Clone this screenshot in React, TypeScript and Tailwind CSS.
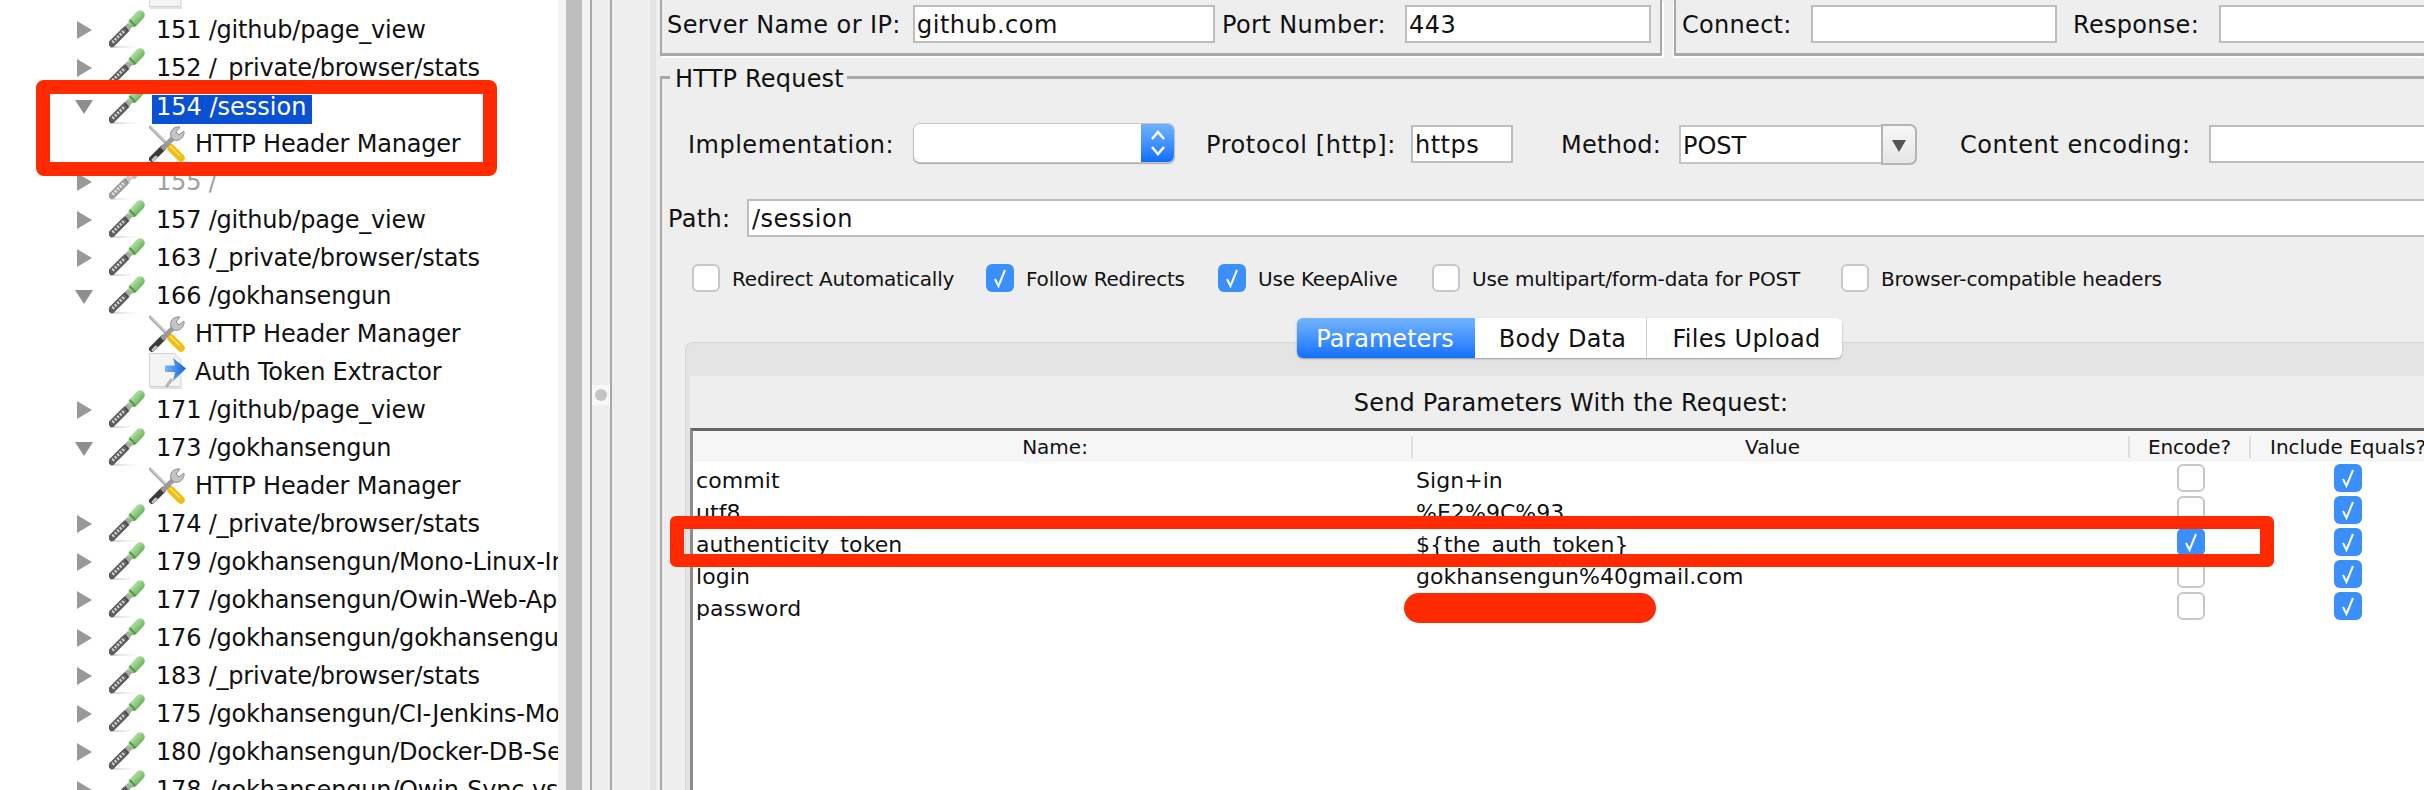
import React from "react";

function Pipette({ disabled }: { disabled?: boolean }) {
  return (
    <svg width="36" height="38" viewBox="0 0 36 38" className={"shrink-0 -translate-y-px " + (disabled ? "grayscale opacity-60" : "")}>
      <defs>
        <linearGradient id="pg" x1="0" y1="0" x2="1" y2="1">
          <stop offset="0" stopColor="#b5e3a8" />
          <stop offset="1" stopColor="#69b45a" />
        </linearGradient>
        <linearGradient id="ps" x1="0" y1="0" x2="1" y2="0">
          <stop offset="0" stopColor="#c9c9c9" />
          <stop offset="1" stopColor="#ffffff" stopOpacity="0" />
        </linearGradient>
      </defs>
      <rect x="1" y="36" width="34" height="2" fill="url(#ps)" />
      <path d="M3 33.5 L17 19.5" stroke="#5c5c5c" strokeWidth="7" strokeLinecap="round" />
      <path d="M3.5 32.5 L16 20" stroke="#d6d6d6" strokeWidth="3" strokeDasharray="2 1.5" />
      <path d="M17 19 L21 15" stroke="#a8a8a8" strokeWidth="6" />
      <path d="M19 21 L16 17" stroke="#444" strokeWidth="1.5" />
      <path d="M24 12.5 L31 5" stroke="url(#pg)" strokeWidth="9.5" strokeLinecap="round" />
      <path d="M20.5 10 L26.5 16" stroke="#58924d" strokeWidth="2" />
    </svg>
  );
}

function Tools() {
  return (
    <svg width="36" height="38" viewBox="0 0 36 38" className="shrink-0">
      <path d="M1 2 L17 18" stroke="#a4a4a4" strokeWidth="3" strokeLinecap="round" />
      <path d="M1 1.5 L17 17.5" stroke="#e6e6e6" strokeWidth="1" />
      <path d="M17 18 L21 22" stroke="#555" strokeWidth="5" />
      <path d="M22 23 L32 33" stroke="#f0bd13" strokeWidth="7.5" strokeLinecap="round" />
      <path d="M21 21 L31 31" stroke="#ffe06a" strokeWidth="1.5" />
      <path d="M3 34 L14 23" stroke="#3a3a3a" strokeWidth="6" strokeLinecap="round" />
      <path d="M4 35 L7 32" stroke="#c4c4c4" strokeWidth="3" strokeLinecap="round" />
      <path d="M13 24 L25 12" stroke="#9a9a9a" strokeWidth="5" />
      <path d="M22 12 C20 6 25 1 31 2 L27 7 L30 10 L35 6 C36 12 30 17 25 15 Z" fill="#c4c4c4" stroke="#8f8f8f" strokeWidth="1" />
    </svg>
  );
}

function DocArrow({ clipped }: { clipped?: boolean }) {
  return (
    <svg width="38" height="38" viewBox="0 0 38 38" className="shrink-0">
      <defs>
        <linearGradient id="da" x1="0" y1="0" x2="1" y2="0">
          <stop offset="0" stopColor="#7fb6f5" />
          <stop offset="1" stopColor="#0f62d8" />
        </linearGradient>
      </defs>
      <path d="M0.5 0.5 H25 L32 7 V33.5 H0.5 Z" fill="#f4f4f4" stroke="#d2d2d2" />
      <rect x="1" y="34" width="32" height="2" fill="#e2e2e2" />
      {!clipped && <path d="M16 12.5 H26 L24 5 L37 15.5 L24 28 L26 19 H16 Z" fill="url(#da)" />}
      {!clipped && <path d="M17 34 L23 26" stroke="#b5b5b5" strokeWidth="3" />}
    </svg>
  );
}

function Arrow({ open }: { open?: boolean }) {
  return (
    <svg width="18" height="18" viewBox="0 0 18 18" className="shrink-0">
      {open ? <path d="M0 3 H18 L9 17 Z" fill="#8e8e8e" /> : <path d="M2 0 L17 9 L2 18 Z" fill="#999" />}
    </svg>
  );
}

type Node = { t: string; kind: "p" | "pOpen" | "tools" | "doc"; sel?: boolean; off?: boolean };
const nodes: Node[] = [
  { t: "151 /github/page_view", kind: "p" },
  { t: "152 /_private/browser/stats", kind: "p" },
  { t: "154 /session", kind: "pOpen", sel: true },
  { t: "HTTP Header Manager", kind: "tools" },
  { t: "155 /", kind: "p", off: true },
  { t: "157 /github/page_view", kind: "p" },
  { t: "163 /_private/browser/stats", kind: "p" },
  { t: "166 /gokhansengun", kind: "pOpen" },
  { t: "HTTP Header Manager", kind: "tools" },
  { t: "Auth Token Extractor", kind: "doc" },
  { t: "171 /github/page_view", kind: "p" },
  { t: "173 /gokhansengun", kind: "pOpen" },
  { t: "HTTP Header Manager", kind: "tools" },
  { t: "174 /_private/browser/stats", kind: "p" },
  { t: "179 /gokhansengun/Mono-Linux-Install", kind: "p" },
  { t: "177 /gokhansengun/Owin-Web-Api-vs", kind: "p" },
  { t: "176 /gokhansengun/gokhansengun.github.io", kind: "p" },
  { t: "183 /_private/browser/stats", kind: "p" },
  { t: "175 /gokhansengun/CI-Jenkins-Mono", kind: "p" },
  { t: "180 /gokhansengun/Docker-DB-Setup", kind: "p" },
  { t: "178 /gokhansengun/Owin-Sync-vs-Async", kind: "p" },
];

function TreeRow({ n }: { n: Node }) {
  if (n.kind === "tools" || n.kind === "doc") {
    return (
      <div className="flex h-[38px] items-center pl-[149px]">
        {n.kind === "tools" ? <Tools /> : <DocArrow />}
        <span className={n.kind === "tools" ? "ml-[10px]" : "ml-[8px]"}>{n.t}</span>
      </div>
    );
  }
  return (
    <div className="flex h-[38px] items-center pl-[75px]">
      <Arrow open={n.kind === "pOpen"} />
      <span className="ml-[16px]">
        <Pipette disabled={n.off} />
      </span>
      {n.sel ? (
        <span className="ml-[7px] mt-[7px] flex h-[29px] items-center bg-[#0a50d2] pb-[5px] pl-[4px] pr-[6px] tracking-[0px] text-white">{n.t}</span>
      ) : (
        <span className={"ml-[11px] " + (n.off ? "text-[#a0a0a0]" : "")}>{n.t}</span>
      )}
    </div>
  );
}

function Input({ w, value, cls }: { w: string; value?: string; cls?: string }) {
  return (
    <div className={"flex h-[38px] shrink-0 items-center border-2 border-[#bdbdbd] bg-white pl-[2px] pt-[2px] tracking-[0.5px] " + w + " " + (cls ?? "")}>{value}</div>
  );
}

function Check({ on }: { on?: boolean }) {
  return on ? (
    <span className="flex h-[28px] w-[28px] shrink-0 items-center justify-center rounded-[6px] bg-[#3a8ffa]">
      <svg width="14" height="20" viewBox="0 0 14 20">
        <path d="M2 11 L5.5 18 L12 2" fill="none" stroke="#fff" strokeWidth="2" />
      </svg>
    </span>
  ) : (
    <span className="h-[28px] w-[28px] shrink-0 rounded-[6px] border-2 border-[#c8c8c8] bg-white" />
  );
}

function CheckLabel({ w, on, t }: { w: string; on?: boolean; t: string }) {
  return (
    <div className={"flex items-center " + w}>
      <Check on={on} />
      <span className="ml-[12px] whitespace-nowrap pt-[2px] text-[20px] tracking-[-0.2px]">{t}</span>
    </div>
  );
}

const params: [string, string, boolean][] = [
  ["commit", "Sign+in", false],
  ["utf8", "%E2%9C%93", false],
  ["authenticity_token", "${the_auth_token}", true],
  ["login", "gokhansengun%40gmail.com", false],
  ["password", "", false],
];

export default function App() {
  return (
    <div className="relative flex h-[790px] w-[2424px] overflow-hidden whitespace-nowrap bg-[#eeeeee] font-['DejaVu_Sans',sans-serif] text-[24px] leading-none text-[#111]">
      {/* Tree */}
      <div className="w-[558px] shrink-0 overflow-hidden bg-white pt-[11px] tracking-[-0.2px]">
        <div className="-mt-[38px] flex h-[38px] items-center pl-[149px]">
          <DocArrow clipped />
        </div>
        {nodes.map((n, i) => (
          <TreeRow key={i} n={n} />
        ))}
      </div>

      {/* Scrollbar */}
      <div className="flex w-[32px] shrink-0 bg-[#f3f3f3] pl-[8px]">
        <div className="w-[16px] bg-[#bdbdbd]" />
      </div>

      {/* Splitter */}
      <div className="flex w-[22px] shrink-0 flex-col justify-center border-x-2 border-[#a8a8a8]">
        <div className="flex h-[20px] items-center justify-center bg-[#f8f8f8]">
          <span className="h-[12px] w-[12px] rounded-full bg-[#c4c4c4]" />
        </div>
      </div>

      <div className="flex w-[48px] shrink-0 justify-end">
        <div className="mr-[4px] w-[6px] bg-[#e3e3e3]" />
      </div>

      {/* Right pane */}
      <div className="flex w-[1764px] shrink-0 flex-col">
        {/* Top */}
        <div className="flex h-[56px] shrink-0">
          <div className="flex h-[56px] w-[1002px] shrink-0 items-start border-x-2 border-b-[3px] border-[#a8a8a8] pl-[5px] pt-[5px] shadow-[2px_2px_0_#fff]">
            <span className="flex h-[38px] w-[246px] shrink-0 items-center pt-[2px] tracking-[0.4px]">Server Name or IP:</span>
            <Input w="w-[302px]" value="github.com" />
            <span className="ml-[7px] flex h-[38px] w-[183px] shrink-0 items-center pt-[2px] tracking-[0.4px]">Port Number:</span>
            <Input w="w-[246px]" value="443" />
          </div>
          <div className="ml-[12px] flex h-[56px] flex-1 items-start overflow-hidden border-b-[3px] border-l-2 border-[#a8a8a8] pl-[6px] pt-[5px] shadow-[-1px_2px_0_#fff]">
            <span className="flex h-[38px] w-[129px] shrink-0 items-center pt-[2px] tracking-[0.3px]">Connect:</span>
            <Input w="w-[246px]" />
            <span className="ml-[16px] flex h-[38px] w-[146px] shrink-0 items-center pt-[2px] tracking-[0.3px]">Response:</span>
            <Input w="w-[300px]" />
          </div>
        </div>

        {/* HTTP Request */}
        <div className="relative mt-[20px] flex-1 border-l-2 border-t-[3px] border-[#a8a8a8]">
          <span className="absolute -top-[12px] left-[8px] bg-[#eeeeee] pl-[5px] pr-[3px] tracking-[0.2px]">HTTP Request</span>

          <div className="mt-[44px] flex h-[42px] items-start">
            <span className="ml-[26px] flex h-[40px] w-[225px] shrink-0 items-center pt-[3px] tracking-[0.5px]">Implementation:</span>
            <div className="flex h-[40px] w-[262px] shrink-0 overflow-hidden rounded-[7px] border border-[#c4c4c4] bg-white shadow-[0_1px_1px_#aaa]">
              <div className="flex-1" />
              <div className="flex w-[33px] items-center justify-center bg-gradient-to-b from-[#6fb2fb] to-[#0a6efd]">
                <svg width="18" height="30" viewBox="0 0 18 30">
                  <path d="M3 11 L9 4 L15 11 M3 19 L9 26 L15 19" fill="none" stroke="#fff" strokeWidth="2.5" />
                </svg>
              </div>
            </div>
            <span className="ml-[31px] flex h-[40px] w-[205px] shrink-0 items-center pt-[3px] tracking-[0.6px]">Protocol [http]:</span>
            <Input w="w-[102px] mt-[2px]" value="https" />
            <span className="ml-[48px] flex h-[40px] w-[118px] shrink-0 items-center pt-[3px] tracking-[0.3px]">Method:</span>
            <div className="mt-[2px] flex h-[40px] w-[238px] shrink-0">
              <div className="flex h-[39px] flex-1 items-center border-2 border-r-0 border-[#c4c4c4] bg-white pl-[2px] pt-[2px]">POST</div>
              <div className="-mt-[1px] flex h-[41px] w-[36px] items-center justify-center rounded-r-[7px] border-2 border-[#b4b4b4] bg-gradient-to-b from-[#f6f6f6] to-[#e6e6e6]">
                <svg width="14" height="14" viewBox="0 0 14 14">
                  <path d="M0 2 H14 L7 14 Z" fill="#555" />
                </svg>
              </div>
            </div>
            <span className="ml-[43px] flex h-[40px] w-[249px] shrink-0 items-center pt-[3px] tracking-[0.55px]">Content encoding:</span>
            <Input w="w-[300px] mt-[2px]" />
          </div>

          <div className="mt-[34px] flex h-[38px] items-center">
            <span className="ml-[6px] w-[79px] shrink-0 pt-[2px] tracking-[0.3px]">Path:</span>
            <Input w="w-[1700px] pl-[3px]" value="/session" />
          </div>

          <div className="ml-[30px] mt-[27px] flex h-[28px]">
            <CheckLabel w="w-[294px]" t="Redirect Automatically" />
            <CheckLabel w="w-[232px]" on t="Follow Redirects" />
            <CheckLabel w="w-[214px]" on t="Use KeepAlive" />
            <CheckLabel w="w-[409px]" t="Use multipart/form-data for POST" />
            <CheckLabel w="w-[320px]" t="Browser-compatible headers" />
          </div>

          {/* Tabs */}
          <div className="relative z-10 ml-[635px] mt-[26px] -mb-[16px] flex h-[40px] w-max rounded-[6px] shadow-[0_1px_2px_#999]">
            <div className="flex w-[178px] items-center justify-center rounded-l-[6px] bg-gradient-to-b from-[#72b4fb] to-[#0b6ffd] pr-[2px] pt-[2px] text-white">Parameters</div>
            <div className="flex w-[172px] items-center justify-center border-r border-[#d0d0d0] bg-white pl-[4px] pt-[2px] tracking-[0.2px]">Body Data</div>
            <div className="flex w-[195px] items-center justify-center rounded-r-[6px] bg-white pl-[4px] pt-[2px] tracking-[0.3px]">Files Upload</div>
          </div>

          {/* Tab pane */}
          <div className="ml-[23px] h-[449px] overflow-hidden rounded-tl-[8px] border-l border-t border-[#d6d6d6] bg-[#e4e4e4] pl-[4px] pt-[33px]">
            <div className="h-full w-[1762px] bg-[#eeeeee]">
              <div className="flex h-[52px] items-center justify-center pt-[2px] tracking-[0.2px]">Send Parameters With the Request:</div>
              <div className="h-full border-l-[3px] border-t-[3px] border-l-[#8c8c8c] border-t-[#666] bg-white">
                <div className="grid h-[31px] grid-cols-[720px_717px_121px_194px] items-center bg-[#f6f6f6] text-[20px]">
                  <span className="flex h-[22px] items-center justify-center border-r-2 border-[#dedede] pl-[6px]">Name:</span>
                  <span className="flex h-[22px] items-center justify-center border-r-2 border-[#dedede] pl-[4px]">Value</span>
                  <span className="flex h-[22px] items-center justify-center border-r-2 border-[#dedede] tracking-[-0.2px]">Encode?</span>
                  <span className="flex h-[22px] items-center justify-center">Include Equals?</span>
                </div>
                {params.map(([k, v, enc]) => (
                  <div key={k} className="grid h-[32px] grid-cols-[720px_717px_121px_194px] items-start">
                    <span className="pl-[3px] pt-[8px] text-[22px] tracking-[0.1px]">{k}</span>
                    <span className="pl-[3px] pt-[8px] text-[22px] tracking-[0.05px]">{v}</span>
                    <span className="flex justify-center pt-[2px]">
                      <Check on={enc} />
                    </span>
                    <span className="flex justify-center pt-[2px]">
                      <Check on />
                    </span>
                  </div>
                ))}
              </div>
            </div>
          </div>
        </div>
      </div>

      {/* Red annotations */}
      <div className="absolute left-[36px] top-[80px] h-[96px] w-[461px] rounded-[8px] border-[14px] border-[#ff2a00]" />
      <div className="absolute left-[670px] top-[516px] h-[51px] w-[1604px] rounded-[6px] border-x-[14px] border-y-[13px] border-[#ff2a00]" />
      <div className="absolute left-[1404px] top-[593px] h-[30px] w-[252px] rounded-full bg-[#ff2a00]" />
    </div>
  );
}
